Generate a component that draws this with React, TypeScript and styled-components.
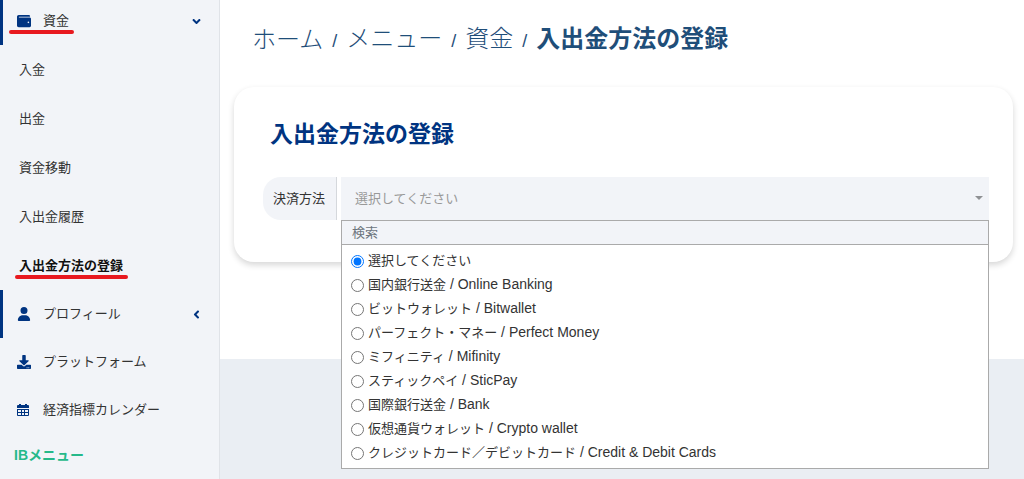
import React from 'react';
import styled, { createGlobalStyle } from 'styled-components';
import { FaWallet, FaDownload, FaAngleDown, FaAngleLeft } from 'react-icons/fa';
import { FaUser } from 'react-icons/fa6';

const GlobalStyle = createGlobalStyle`
  *, *::before, *::after { box-sizing: border-box; }
  body {
    margin: 0;
    background: #eaeef3;
    color: #333;
    font: 400 13px/24px "Liberation Sans", "Noto Sans CJK JP", sans-serif;
  }
  ul, ol { margin: 0; padding: 0; list-style: none; }
  a { color: inherit; text-decoration: none; }
`;

const Page = styled.div`
  display: flex;
  min-height: 100vh;
`;

const Sidebar = styled.nav`
  flex: 0 0 220px;
  background: #f2f4f8;
  border-right: 1px solid #e0e3e8;
`;

const MenuLink = styled.a<{ $marked?: boolean; $first?: boolean }>`
  display: flex;
  align-items: center;
  height: ${(p) => (p.$first ? 45 : 48)}px;
  padding: 0 16px 0 14px;
  padding-bottom: ${(p) => (p.$first ? 3 : 0)}px;
  border-left: 3px solid ${(p) => (p.$marked ? '#003481' : 'transparent')};
  color: #333;

  svg { color: #003481; }
`;

const MenuIcon = styled.span`
  display: flex;
  width: 26px;
  svg { height: 14px; width: auto; }
`;

const MenuText = styled.span`
  position: relative;
  flex: 1;
`;

const SubLink = styled.a<{ $current?: boolean }>`
  display: flex;
  align-items: center;
  height: 49px;
  padding: 0 19px;
  color: ${(p) => (p.$current ? '#111' : '#333')};
  font-weight: ${(p) => (p.$current ? 700 : 400)};
`;

const Marked = styled.span<{ $lead: number }>`
  display: inline-block;
  position: relative;

  &::after {
    content: '';
    position: absolute;
    left: -${(p) => p.$lead}px;
    right: -5px;
    bottom: -1px;
    height: 4px;
    border-radius: 2px;
    background: #e8191f;
  }
`;

const GroupTitle = styled.h2`
  margin: 0;
  padding: 9px 14px;
  color: #26b98a;
  font-size: 14px;
  line-height: 24px;
`;

const Main = styled.main`
  flex: 1;
  min-width: 0;
`;

const Content = styled.div`
  padding: 0 11px 97px 14px;
  background: #fff;
`;

const Breadcrumb = styled.ol`
  display: flex;
  align-items: center;
  height: 87px;
  padding: 0 18px 7px;
  color: #1f4e79;
  font-size: 24px;
  font-weight: 300;
  line-height: 36px;
`;

const Crumb = styled.li`
  & + &::before {
    content: '/';
    padding: 0 9px;
    font-size: 18px;
    font-weight: 400;
  }
  &:last-child { font-weight: 700; }
`;

const Card = styled.section`
  padding: 29px 24px 42px 29px;
  border-radius: 20px;
  background: #fff;
  box-shadow: 0 3px 6px rgba(0, 0, 0, 0.16);
`;

const CardTitle = styled.h1`
  margin: 0 0 25px;
  padding: 0 7px;
  color: #003481;
  font-size: 23px;
  line-height: 36px;
`;

const Field = styled.div`
  display: flex;
  gap: 4px;
  height: 43px;
`;

const FieldLabel = styled.label`
  display: flex;
  align-items: center;
  flex: 0 0 74px;
  padding-left: 10px;
  border-right: 1px solid #d5d8dc;
  border-radius: 18px 0 0 18px;
  background: #f2f4f8;
  color: #333;
`;

const SelectWrap = styled.div`
  position: relative;
  flex: 1;

  &::after {
    content: '';
    position: absolute;
    top: 19px;
    right: 6px;
    border: 4px solid transparent;
    border-top-color: #8f9194;
    border-bottom: 0;
  }
`;

const Select = styled.select`
  appearance: none;
  width: 100%;
  height: 43px;
  padding: 0 14px;
  border: 0;
  border-radius: 0;
  outline: 0;
  background: #f2f4f8;
  color: #999;
  font: inherit;
`;

const Dropdown = styled.div`
  position: absolute;
  z-index: 1;
  top: 43px;
  left: 0;
  right: 0;
  border: 1px solid #aaa;
  background: #fff;
`;

const Search = styled.input`
  display: block;
  width: 100%;
  height: 24px;
  padding: 0 10px;
  border: 0;
  border-bottom: 1px solid #aaa;
  border-radius: 0;
  outline: 0;
  background: #f2f4f8;
  font: inherit;

  &::placeholder { color: #6c757d; }
`;

const Options = styled.ul`
  padding: 3px 9px 4px;
`;

const Option = styled.label`
  display: flex;
  align-items: center;
  gap: 4px;
  height: 24px;
  font-size: 14px;
`;

const Kana = styled.span`
  font-size: 13px;
`;

const Radio = styled.input`
  width: 13px;
  height: 13px;
  margin: 3px 0 0;
`;

function CalendarIcon() {
  return (
    <svg viewBox="0 0 12 14" fill="currentColor" aria-hidden="true">
      <path
        fillRule="evenodd"
        d="M2 1h2v1h4V1h2v1h1a1 1 0 0 1 1 1v2H0V3a1 1 0 0 1 1-1h1zM0 6h12v6a1 1 0 0 1-1 1H1a1 1 0 0 1-1-1zM1 7v2h3V7zm4 0v2h2V7zm3 0v2h3V7zM1 10v2h3v-2zm4 0v2h2v-2zm3 0v2h3v-2z"
      />
    </svg>
  );
}

const subItems = ['入金', '出金', '資金移動', '入出金履歴'];

const methods: [string, string][] = [
  ['選択してください', ''],
  ['国内銀行送金', ' / Online Banking'],
  ['ビットウォレット', ' / Bitwallet'],
  ['パーフェクト・マネー', ' / Perfect Money'],
  ['ミフィニティ', ' / Mifinity'],
  ['スティックペイ', ' / SticPay'],
  ['国際銀行送金', ' / Bank'],
  ['仮想通貨ウォレット', ' / Crypto wallet'],
  ['クレジットカード／デビットカード', ' / Credit & Debit Cards'],
];

export default function App() {
  return (
    <>
      <GlobalStyle />
      <Page>
        <Sidebar>
          <MenuLink href="#funds" $marked $first>
            <MenuIcon><FaWallet /></MenuIcon>
            <MenuText><Marked $lead={34}>資金</Marked></MenuText>
            <FaAngleDown />
          </MenuLink>
          {subItems.map((name) => (
            <SubLink key={name} href="#funds">{name}</SubLink>
          ))}
          <SubLink href="#methods" $current>
            <Marked $lead={4}>入出金方法の登録</Marked>
          </SubLink>
          <MenuLink href="#profile" $marked>
            <MenuIcon><FaUser /></MenuIcon>
            <MenuText>プロフィール</MenuText>
            <FaAngleLeft />
          </MenuLink>
          <MenuLink href="#platform">
            <MenuIcon><FaDownload /></MenuIcon>
            <MenuText>プラットフォーム</MenuText>
          </MenuLink>
          <MenuLink href="#calendar">
            <MenuIcon><CalendarIcon /></MenuIcon>
            <MenuText>経済指標カレンダー</MenuText>
          </MenuLink>
          <GroupTitle>IBメニュー</GroupTitle>
        </Sidebar>
        <Main>
          <Content>
            <Breadcrumb>
              <Crumb><a href="#home">ホーム</a></Crumb>
              <Crumb><a href="#menu">メニュー</a></Crumb>
              <Crumb><a href="#funds">資金</a></Crumb>
              <Crumb>入出金方法の登録</Crumb>
            </Breadcrumb>
            <Card>
              <CardTitle>入出金方法の登録</CardTitle>
              <Field>
                <FieldLabel htmlFor="method">決済方法</FieldLabel>
                <SelectWrap>
                  <Select id="method">
                    <option>選択してください</option>
                  </Select>
                  <Dropdown>
                    <Search type="text" placeholder="検索" aria-label="検索" />
                    <Options>
                      {methods.map(([name, latin], i) => (
                        <li key={name}>
                          <Option>
                            <Radio type="radio" name="method" defaultChecked={i === 0} />
                            <span><Kana>{name}</Kana>{latin}</span>
                          </Option>
                        </li>
                      ))}
                    </Options>
                  </Dropdown>
                </SelectWrap>
              </Field>
            </Card>
          </Content>
        </Main>
      </Page>
    </>
  );
}
